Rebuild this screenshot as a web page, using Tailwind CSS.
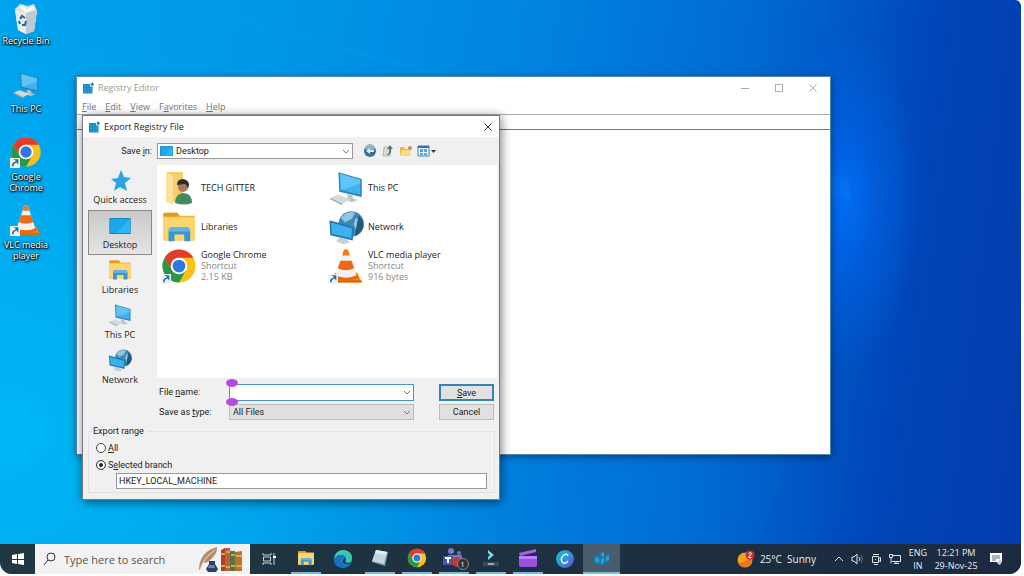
<!DOCTYPE html>
<html lang="en">
<head>
    <meta charset="UTF-8">
    <meta name="viewport" content="width=device-width, initial-scale=1.0">
    <title>Export Registry File</title>
    <script src="https://cdn.jsdelivr.net/npm/@tailwindcss/browser@4"></script>
</head>
<body class="bg-white font-['Open_Sans',sans-serif] text-[9px] leading-[11px] text-[#222]">
    <!-- Shared icons -->
    <svg class="hidden">
        <symbol id="chrome" viewBox="0 0 48 48">
            <circle cx="24" cy="24" r="22" fill="#fbc116"/>
            <path d="M4.9 13A22 22 0 0 1 43.1 13H24a11 11 0 0 0-9.5 16.500z" fill="#e33b2e"/>
            <path d="M4.900 13A22 22 0 0 0 24 46l9.500-16.500a11 11 0 0 1-19 0z" fill="#279847"/>
            <circle cx="24" cy="24" r="11" fill="#fff"/>
            <circle cx="24" cy="24" r="8.500" fill="#2f78e0"/>
        </symbol>
        <symbol id="vlc" viewBox="0 0 48 48">
            <path d="M9 33h30l6 13H3z" fill="#f38a0b"/>
            <path d="M3 43h42v3H3z" fill="#d66a08"/>
            <path d="M21 3q3-3 6 0l11 34q-14 7-28 0z" fill="#f2f2f2"/>
            <path d="M21 3q3-3 6 0l2 7H19z" fill="#ef7a1a"/>
            <path d="M16.500 17h15l3.500 10q-11 5-22 0z" fill="#ea6a16"/>
            <path d="M9 36q15 7 30 0l2 4q-17 7-34 0z" fill="#ea6a16"/>
        </symbol>
        <symbol id="pc" viewBox="0 0 48 48">
            <path d="M14 3l31 9v24L15 29z" fill="#2b82b4"/>
            <path d="M16 5l27 8v20L17 27z" fill="#3fb2ef"/>
            <path d="M16 5l27 8v5L17 27z" fill="#62c4f5"/>
            <path d="M26 32l7 2v4l7 2-8 3-12-4 6-2z" fill="#bac4cb"/>
            <path d="M3 37l10-4 17 6-11 6z" fill="#d3dadd"/>
            <path d="M3 37l16 8v2L3 39z" fill="#98a4ab"/>
        </symbol>
        <symbol id="network" viewBox="0 0 48 48">
            <circle cx="31" cy="20" r="17" fill="#3b88b5"/>
            <path d="M17 12Q25 1 36 5l-4 8-9 5zM37 12l8 3 1 9-8 5-4-9z" fill="#8fc6e0"/>
            <path d="M41 8q12 14 0 25l-5 3 2-13z" fill="#24577c"/>
            <path d="M2 15l32 9-1 18-30-7z" fill="#2378ae"/>
            <path d="M4 18l28 8-1 13-26-6z" fill="#3bb1f0"/>
            <path d="M15 38l9 2 5 5-9 2-9-4z" fill="#c6d0d5"/>
        </symbol>
        <symbol id="libraries" viewBox="0 0 48 48">
            <path d="M3 7q0-2 2-2h17l3 4h20v33H3z" fill="#f0b93c"/>
            <path d="M3 7q0-2 2-2h17l2 5H3z" fill="#e29a20"/>
            <path d="M3 11h42v31H3z" fill="#fad570"/>
            <path d="M10 43V30q0-6 6-6h17q6 0 6 6v13h-8v-9H18v9z" fill="#3e96d1"/>
            <path d="M16 24h17q6 0 6 6H10q0-6 6-6z" fill="#63b3e4"/>
        </symbol>
        <symbol id="screen" viewBox="0 0 24 18">
            <path d="M0 0h24v18H0z" fill="#1581bd"/>
            <path d="M1 1h22v16H1z" fill="#1ba7ee"/>
            <path d="M23 1v16H8z" fill="#2cb8f8"/>
        </symbol>
        <symbol id="regedit" viewBox="0 0 24 24">
            <path d="M2 4h14v5h5v14H2z" fill="#1580b3"/>
            <path d="M3 5h6v5H3zM10 5h5v5h-5zM3 11h6v5H3zM10 11h5v5h-5zM16 11h4v5h-4zM3 17h6v5H3zM10 17h5v5h-5zM16 17h4v5h-4z" fill="#239ed0"/>
            <path d="M17 3l4-2 3 3-2 4-4-1z" fill="#2583b4"/>
        </symbol>
        <symbol id="shortcut" viewBox="0 0 12 12">
            <path d="M0 0h12v12H0z" fill="#eef3f6"/>
            <path d="M2.500 10q-.5-5 4-5.500V2.500h-2V1.500H10v6H9L8.500 5.500Q4 6 4.500 10z" fill="#276aa0"/>
        </symbol>
        <symbol id="chevron" viewBox="0 0 8 5">
            <path d="M1 1l3 3 3-3" fill="none" stroke="#777" stroke-width="1"/>
        </symbol>
    </svg>

    <div class="relative h-screen overflow-hidden pr-[3px] pb-[2px]">
        <div class="relative flex h-full flex-col overflow-hidden rounded-tr-md rounded-b-xl bg-[radial-gradient(ellipse_75px_170px_at_845px_200px,#006cf5_0%,#0066ee90_40%,transparent_100%),radial-gradient(ellipse_500px_400px_at_0%_75%,#00b7f5_0%,transparent_100%),linear-gradient(97deg,#00a3ed_0%,#0098e8_25%,#0083df_50%,#0069d2_70%,#0045b7_87%,#033caf_100%)]">
            <!-- Light rays of the wallpaper -->
            <svg class="absolute left-0 top-0 h-full w-full" viewBox="0 0 1021 574" preserveAspectRatio="none">
                <path d="M170 0L850 180v20z" fill="#1ba4f5" opacity=".1"/>
                <path d="M500 574L850 250l-100 324z" fill="#00a4f5" opacity=".05"/>
            </svg>

            <!-- Desktop icons -->
            <ul class="relative flex w-[52px] grow flex-col text-center text-[9px] leading-[11px] text-white [text-shadow:0_1px_2px_#000,1px_1px_2px_#000,0_0_2px_#000]">
                <li class="flex h-[68px] flex-col items-center pt-[3px]">
                    <svg class="h-8 w-7 shrink-0" viewBox="0 0 28 32">
                        <path d="M3 6l5-5 8 2 6-2 3 7-3 20-8 3-8-4z" fill="#d7e2e7"/>
                        <path d="M3 7l11 3 11-3-3 21-8 3-8-4z" fill="#e7ebed"/>
                        <path d="M14 10l11-3-3 21-8 3z" fill="#bfcbd1"/>
                        <path d="M7 4l4-2 4 4 6-3 2 3-9 4z" fill="#f7f9fa"/>
                        <path d="M8 16l2-3 3 2M14 18l-1 4h-3M8 21l-1-3" fill="none" stroke="#1769ad" stroke-width="2"/>
                    </svg>
                    <span class="whitespace-nowrap">Recycle Bin</span>
                </li>
                <li class="flex h-[68px] flex-col items-center pt-[3px]">
                    <svg class="h-7 w-8 shrink-0"><use href="#pc"/></svg>
                    <span class="mt-1">This PC</span>
                </li>
                <li class="flex h-[68px] flex-col items-center">
                    <span class="relative mb-[3px] h-8 w-8 shrink-0">
                        <svg class="h-8 w-8"><use href="#chrome"/></svg>
                        <svg class="absolute bottom-0 left-0 h-[10px] w-[10px]"><use href="#shortcut"/></svg>
                    </span>
                    <span>Google Chrome</span>
                </li>
                <li class="flex h-[68px] flex-col items-center">
                    <span class="relative mb-[3px] h-8 w-8 shrink-0">
                        <svg class="h-8 w-8"><use href="#vlc"/></svg>
                        <svg class="absolute bottom-0 left-0 h-[10px] w-[10px]"><use href="#shortcut"/></svg>
                    </span>
                    <span class="whitespace-nowrap">VLC media<br>player</span>
                </li>
            </ul>

            <!-- Registry Editor window -->
            <section class="absolute left-[76px] top-[76px] flex h-[379px] w-[755px] flex-col border border-[#5288a8] bg-white shadow-[0_2px_8px_#0006]">
                <header class="flex h-[21px] shrink-0 items-center pl-[5px] text-[#999]">
                    <svg class="h-3 w-3"><use href="#regedit"/></svg>
                    <h1 class="ml-1 grow">Registry Editor</h1>
                    <button class="flex h-full w-[34px] items-center justify-center" aria-label="Minimize"><svg class="h-2 w-2" viewBox="0 0 8 8"><path d="M0 4.500h8" stroke="#aaa"/></svg></button>
                    <button class="flex h-full w-[34px] items-center justify-center" aria-label="Maximize"><svg class="h-2 w-2" viewBox="0 0 8 8"><path d="M.5.5h7v7h-7z" fill="none" stroke="#aaa"/></svg></button>
                    <button class="flex h-full w-[34px] items-center justify-center" aria-label="Close"><svg class="h-2 w-2" viewBox="0 0 8 8"><path d="M.5.5l7 7m0-7l-7 7" stroke="#aaa"/></svg></button>
                </header>
                <nav class="flex h-4 shrink-0 items-center gap-[9px] pl-[5px] text-[#777]">
                    <button><u>F</u>ile</button>
                    <button><u>E</u>dit</button>
                    <button><u>V</u>iew</button>
                    <button>F<u>a</u>vorites</button>
                    <button><u>H</u>elp</button>
                </nav>
                <div class="h-4 shrink-0 border-y border-t-[#aaa] border-b-[#777]"></div>
                <div class="grow"></div>
            </section>

            <!-- Export dialog -->
            <form class="absolute left-[82px] top-[115px] flex h-[385px] w-[418px] flex-col border border-[#778] bg-[#f0f0f0] shadow-[1px_2px_10px_#0008]">
                <header class="flex h-[21px] shrink-0 items-center bg-white pl-[5px]">
                    <svg class="h-3 w-3"><use href="#regedit"/></svg>
                    <h2 class="ml-1 grow">Export Registry File</h2>
                    <button type="button" class="flex h-full w-[22px] items-center justify-center" aria-label="Close"><svg class="h-2 w-2" viewBox="0 0 8 8"><path d="M.5.5l7 7m0-7l-7 7" stroke="#333"/></svg></button>
                </header>

                <div class="flex h-[28px] shrink-0 items-center font-[Roboto,sans-serif]">
                    <label for="saveIn" class="w-[74px] pr-[5px] text-right">Save <u>i</u>n:</label>
                    <div class="relative w-[196px]">
                        <select id="saveIn" class="block h-4 w-full appearance-none border border-[#999] bg-white pl-[18px] leading-[13px]"><option>Desktop</option></select>
                        <svg class="absolute left-[3px] top-[3px] h-[10px] w-[13px]"><use href="#screen"/></svg>
                        <svg class="absolute right-[3px] top-[6px] h-[5px] w-2"><use href="#chevron"/></svg>
                    </div>
                    <div class="ml-[10px] flex items-center gap-1">
                        <button type="button" aria-label="Back"><svg class="block h-[14px] w-[14px]" viewBox="0 0 14 14"><circle cx="7" cy="7" r="6" fill="#3b6f8e"/><path d="M2 5a5 5 0 0 1 10 0q-5 2-10 0z" fill="#8fb4c4"/><path d="M3 7l4-3v2h4v2H7v2z" fill="#d8f2ff"/><path d="M3 10q4 3 8 0l-2 2H5z" fill="#1ba1db"/></svg></button>
                        <button type="button" aria-label="Up one level"><svg class="block h-[14px] w-[14px]" viewBox="0 0 14 14"><path d="M3 3h7l-1 9H2z" fill="#dad9cf" stroke="#aaa79a" stroke-width=".7"/><path d="M5 11q4-1 3-6H6l3-4 3 4h-2q1 5-3 6z" fill="#547b70"/></svg></button>
                        <button type="button" aria-label="New folder"><svg class="block h-[14px] w-[14px]" viewBox="0 0 14 14"><path d="M1 3h4l1 2h5v7H1z" fill="#e7b94c"/><path d="M3 6h9l-2 6H1z" fill="#fbdc80"/><circle cx="11" cy="4" r="2" fill="#dd8450"/></svg></button>
                        <button type="button" class="flex items-center" aria-label="View menu"><svg class="h-[14px] w-[19px]" viewBox="0 0 19 14"><path d="M1 2h11v10H1z" fill="#eaf6ff" stroke="#3f83b5"/><path d="M1 2h11v2H1z" fill="#2d73b3"/><path d="M3 5h3v3H3zM7 5h3v3H7zM3 9h3v2H3zM7 9h3v2H7z" fill="#5ba4d6"/><path d="M14 6h5l-2.500 3z" fill="#333"/></svg></button>
                    </div>
                </div>

                <div class="flex shrink-0">
                    <!-- Places bar -->
                    <div class="ml-[5px] mr-[5px] w-16 shrink-0">
                        <button type="button" class="flex h-[45px] w-full flex-col items-center justify-end gap-[2px] pb-[5px]">
                            <svg class="h-6 w-6" viewBox="0 0 24 24"><path d="M13 2l3 7 7 1-6 5 2 8-7-4-6 4 2-8-5-4 7-1z" fill="#29a5e5"/></svg>
                            <span>Quick access</span>
                        </button>
                        <button type="button" class="flex h-[45px] w-full flex-col items-center justify-end gap-[2px] border border-[#888] bg-gradient-to-b from-[#c9c9c9] to-[#e5e5e5] pb-1">
                            <svg class="mb-[3px] h-4 w-[22px]"><use href="#screen"/></svg>
                            <span>Desktop</span>
                        </button>
                        <button type="button" class="flex h-[45px] w-full flex-col items-center justify-end gap-[2px] pb-[5px]">
                            <svg class="h-6 w-6"><use href="#libraries"/></svg>
                            <span>Libraries</span>
                        </button>
                        <button type="button" class="flex h-[45px] w-full flex-col items-center justify-end gap-[2px] pb-[5px]">
                            <svg class="h-6 w-6"><use href="#pc"/></svg>
                            <span>This PC</span>
                        </button>
                        <button type="button" class="flex h-[45px] w-full flex-col items-center justify-end gap-[2px] pb-[5px]">
                            <svg class="h-6 w-6"><use href="#network"/></svg>
                            <span>Network</span>
                        </button>
                    </div>

                    <div class="grow">
                        <!-- File list -->
                        <ul class="mr-[2px] grid h-[213px] grid-cols-[167px_1fr] content-start bg-white pl-1 pt-[3px]">
                            <li class="flex h-[39px] items-center gap-1">
                                <svg class="h-9 w-9" viewBox="0 0 36 36">
                                    <path d="M5 2h17v30H5z" fill="#f5ce6d"/>
                                    <path d="M5 2l7 4v29l-7-3z" fill="#fbe39a"/>
                                    <path d="M14 33q0-9 8-10 9 0 9 10-8 3-17 0z" fill="#438b60"/>
                                    <circle cx="22" cy="17" r="5" fill="#ad765a"/>
                                    <path d="M16 15q0-6 6-6 6 1 6 6l-1 4q-1-5-4-5z" fill="#2b2b2c"/>
                                </svg>
                                <span>TECH GITTER</span>
                            </li>
                            <li class="flex h-[39px] items-center gap-1">
                                <svg class="h-9 w-9"><use href="#pc"/></svg>
                                <span>This PC</span>
                            </li>
                            <li class="flex h-[39px] items-center gap-1">
                                <svg class="h-9 w-9"><use href="#libraries"/></svg>
                                <span>Libraries</span>
                            </li>
                            <li class="flex h-[39px] items-center gap-1">
                                <svg class="h-9 w-9"><use href="#network"/></svg>
                                <span>Network</span>
                            </li>
                            <li class="flex h-[39px] items-center gap-1">
                                <span class="relative h-9 w-9">
                                    <svg class="h-9 w-9"><use href="#chrome"/></svg>
                                    <svg class="absolute bottom-0 left-0 h-[10px] w-[10px]"><use href="#shortcut"/></svg>
                                </span>
                                <span>Google Chrome<span class="block text-[#888]">Shortcut<br>2.15 KB</span></span>
                            </li>
                            <li class="flex h-[39px] items-center gap-1">
                                <span class="relative h-9 w-9">
                                    <svg class="h-9 w-9"><use href="#vlc"/></svg>
                                    <svg class="absolute bottom-0 left-0 h-[10px] w-[10px]"><use href="#shortcut"/></svg>
                                </span>
                                <span>VLC media player<span class="block text-[#888]">Shortcut<br>916 bytes</span></span>
                            </li>
                        </ul>

                        <div class="mr-[5px] mt-[6px] grid grid-cols-[72px_185px_1fr] items-center gap-y-[3px] font-[Roboto,sans-serif]">
                            <label for="fileName" class="pl-[2px]">File <u>n</u>ame:</label>
                            <div class="relative">
                                <input id="fileName" type="text" class="block h-[17px] w-full border border-[#4a94c4] bg-white px-1 outline-none">
                                <svg class="absolute right-[3px] top-[6px] h-[5px] w-2"><use href="#chevron"/></svg>
                                <!-- selection handles -->
                                <span class="absolute -left-[3px] -top-[5px] z-10 h-2 w-3 rounded-[50%] bg-[#b44bdc]"></span>
                                <span class="absolute -bottom-[5px] -left-[3px] z-10 h-2 w-3 rounded-[50%] bg-[#b44bdc]"></span>
                            </div>
                            <button type="submit" class="ml-auto h-[17px] w-[55px] border-2 border-[#3585b4] bg-[#e1e1e1] leading-[12px]"><u>S</u>ave</button>
                            <label for="fileType" class="pl-[2px]">Save as <u>t</u>ype:</label>
                            <div class="relative">
                                <select id="fileType" class="block h-4 w-full appearance-none border border-[#bbb] bg-[#e0e0e0] pl-[3px] leading-[13px]"><option>All Files</option></select>
                                <svg class="absolute right-[3px] top-[6px] h-[5px] w-2"><use href="#chevron"/></svg>
                            </div>
                            <button type="button" class="ml-auto h-4 w-[55px] border border-[#bbb] bg-[#e1e1e1] leading-[12px]">Cancel</button>
                        </div>
                    </div>
                </div>

                <fieldset class="mx-[5px] mt-[6px] h-[67px] shrink-0 border border-[#e2e2e2] px-[7px] font-[Roboto,sans-serif]">
                    <legend class="-ml-[3px] pr-1">Export range</legend>
                    <label class="flex h-[17px] items-center gap-[2px] pt-[5px]"><input type="radio" name="range" class="h-[10px] w-[10px] appearance-none rounded-full border border-[#444] bg-white checked:bg-[#222] checked:shadow-[inset_0_0_0_2px_white]"><span><u>A</u>ll</span></label>
                    <label class="flex h-[17px] items-center gap-[2px] pt-[5px]"><input type="radio" name="range" checked class="h-[10px] w-[10px] appearance-none rounded-full border border-[#444] bg-white checked:bg-[#222] checked:shadow-[inset_0_0_0_2px_white]"><span>S<u>e</u>lected branch</span></label>
                    <input type="text" value="HKEY_LOCAL_MACHINE" aria-label="Selected branch" class="ml-5 mt-[2px] block h-4 w-[371px] border border-[#999] bg-white px-[2px]">
                </fieldset>
            </form>

            <!-- Taskbar -->
            <footer class="relative flex h-[30px] shrink-0 items-stretch bg-gradient-to-r from-[#203842] to-[#1b2a40] text-[#e8eef2]">
                <button class="flex w-[35px] items-center justify-center" aria-label="Start"><svg class="h-3 w-3" viewBox="0 0 12 12"><path d="M0 2l5-1v5H0zM6 1l6-1v6H6zM0 7h5v4l-5-1zM6 7h6v5l-6-1z" fill="#fff"/></svg></button>
                <label class="flex w-[215px] items-center bg-[#f2f2f2] pl-2">
                    <svg class="h-[14px] w-[14px] shrink-0" viewBox="0 0 14 14"><circle cx="8" cy="5" r="4" fill="none" stroke="#333"/><path d="M5 8l-4 5" stroke="#333"/></svg>
                    <input type="search" placeholder="Type here to search" aria-label="Search" class="ml-[7px] w-0 grow text-[11px] outline-none placeholder:text-[#555]">
                    <svg class="mr-[6px] h-7 w-12 shrink-0" viewBox="0 0 48 28">
                        <path d="M3 25Q3 7 21 2q1 7-9 15l-5 1-3 7z" fill="#b68c68"/>
                        <path d="M4 25Q8 12 19 5" fill="none" stroke="#f2dfc5"/>
                        <path d="M13 16h6v3l3 5-2 3h-8l-2-3 3-5z" fill="#294064"/>
                        <path d="M13 20h5l1 3h-7z" fill="#7287a6"/>
                        <path d="M25 5l4-2v23h-4z" fill="#ad4129"/><path d="M29 3h5v23h-5z" fill="#c95b36"/><path d="M34 6h5v20h-5z" fill="#5a7544"/><path d="M39 7l7-1v20h-7z" fill="#ba712e"/>
                        <path d="M25 9h4M30 7h4M35 10h4M40 11h6M25 21h4M30 22h4M35 21h4M40 21h6" stroke="#e8bf55" stroke-width="1.500"/>
                    </svg>
                </label>
                <button class="flex w-[37px] items-center justify-center" aria-label="Task view"><svg class="h-[14px] w-[14px]" viewBox="0 0 14 14"><path d="M1 1v2h8V1M1 13v-2h8v2M1.500 5h7v4h-7zM12 1v12" fill="none" stroke="#c7d0d4"/><path d="M11 4h3v2h-3z" fill="#fff"/></svg></button>
                <button class="flex w-[37px] items-center justify-center" aria-label="File Explorer"><span class="flex h-full w-[30px] items-center justify-center border-b-2 border-[#76b9ed]"><svg class="h-[18px] w-[18px]"><use href="#libraries"/></svg></span></button>
                <button class="flex w-[37px] items-center justify-center" aria-label="Edge"><svg class="h-5 w-5" viewBox="0 0 20 20"><circle cx="10" cy="10" r="9" fill="#1685ce"/><path d="M1 10Q2 1 11 1q8 1 8 8 0 5-5 5l-2-2q3-5-3-6-5 0-8 4z" fill="#3bc8aa"/><path d="M1 10q4-5 8-4 5 1 3 5 1-2-2-2-3 1-2 4 2 4 8 3-3 3-7 3Q1 18 1 10z" fill="#1673c1"/><path d="M12 9q2 2 0 4 2 2 6 0l-2 2q-3 1-6-1-1-3 2-5z" fill="#203842"/></svg></button>
                <button class="flex w-[37px] items-center justify-center" aria-label="Notepad"><span class="flex h-full w-[30px] items-center justify-center border-b-2 border-[#76b9ed]"><svg class="h-[18px] w-[18px]" viewBox="0 0 18 18"><path d="M5 1l12 2-3 14-13-4z" fill="#7f9dab"/><path d="M5 1l11 2-3 12-12-3z" fill="#c3d6dd"/><path d="M5 1l11 2-1 3-11-2z" fill="#e3edf0"/></svg></span></button>
                <button class="flex w-[37px] items-center justify-center" aria-label="Chrome"><span class="flex h-full w-[30px] items-center justify-center border-b-2 border-[#76b9ed]"><svg class="h-5 w-5"><use href="#chrome"/></svg></span></button>
                <button class="flex w-[37px] items-center justify-center" aria-label="Teams"><span class="relative flex h-full w-[30px] items-center justify-center border-b-2 border-[#76b9ed]">
                    <svg class="h-5 w-6" viewBox="0 0 24 20"><circle cx="9" cy="3" r="3" fill="#777ddd"/><circle cx="17" cy="5" r="2" fill="#6975c8"/><path d="M6 7h14v7q-4 5-11 2z" fill="#7279d5"/><path d="M1 8h10v9H1z" fill="#4855b5"/><path d="M3 10h6M6 10v5" stroke="#fff" stroke-width="2"/><circle cx="15" cy="14" r="5" fill="#c8372d"/></svg>
                    <span class="absolute bottom-[2px] right-0 h-3 w-3 rounded-full border border-[#888] bg-[#303035] text-[8px] leading-[10px]">1</span>
                </span></button>
                <button class="flex w-[37px] items-center justify-center" aria-label="Filmora"><span class="flex h-full w-[30px] items-center justify-center border-b-2 border-[#76b9ed]"><svg class="h-5 w-5" viewBox="0 0 20 20"><path d="M7 2l6 5-6 5V9l2-2-2-2z" fill="#78dcec"/><path d="M2 14h16v4H2z" fill="#3b4b5d"/><path d="M7 16h6" stroke="#fff"/></svg></span></button>
                <button class="flex w-[37px] items-center justify-center" aria-label="Clipchamp"><span class="flex h-full w-[30px] items-center justify-center border-b-2 border-[#76b9ed]"><svg class="h-5 w-5" viewBox="0 0 20 20"><path d="M1 5l17-4v3L2 8z" fill="#a463ec"/><path d="M1 8h18v9q0 2-2 2H3q-2 0-2-2z" fill="#9b50e0"/><path d="M1 8h18v3H1z" fill="#c07cff"/></svg></span></button>
                <button class="flex w-[37px] items-center justify-center" aria-label="Canva"><svg class="h-5 w-5" viewBox="0 0 20 20"><defs><linearGradient id="canvaFill" x1="0" y1="0" x2="1" y2="1"><stop stop-color="#16c4d2"/><stop offset=".6" stop-color="#3689d9"/><stop offset="1" stop-color="#7637dc"/></linearGradient></defs><circle cx="10" cy="10" r="9" fill="url(#canvaFill)"/><path d="M13 7q-1-3-4-1-4 3-2 7 3 3 6-1" fill="none" stroke="#e4faff" stroke-width="1.500"/></svg></button>
                <button class="flex w-[37px] items-center justify-center border-b-2 border-[#76b9ed] bg-[#4a5c6b]" aria-label="Registry Editor"><svg class="h-[18px] w-[18px]" viewBox="0 0 18 18"><path d="M1 7l4-1V5l3-1V1l3 2v3l3-1V3l3 2-1 9-7 3-8-3z" fill="#1679a5"/><path d="M2 8l4 1v5l-4-2zM9 3l2 1v4L8 7zM8 10l3-1v5l-3 1zM13 8l3-2v5l-3 1z" fill="#2f9fc8"/></svg></button>

                <div class="ml-auto flex items-center">
                    <button class="flex items-center gap-[5px] text-[10px]">
                        <svg class="h-[18px] w-[18px]" viewBox="0 0 18 18"><circle cx="8" cy="10" r="7.500" fill="#f4a11b"/><path d="M1 12q7 3 12-6l2 2q1 8-7 9-5 0-7-5z" fill="#e7761d"/><circle cx="13" cy="5" r="4.500" fill="#c5322c"/><path d="M11.500 3.500q3-2 3 0l-3 4h3" fill="none" stroke="#fff"/></svg>
                        <span class="whitespace-pre">25°C  Sunny</span>
                    </button>
                    <div class="ml-[18px] flex items-center gap-[7px]">
                        <button aria-label="Hidden icons"><svg class="block h-3 w-[10px]" viewBox="0 0 10 12"><path d="M1 8l4-4 4 4" fill="none" stroke="#dce4e8"/></svg></button>
                        <button aria-label="Volume"><svg class="block h-3 w-3" viewBox="0 0 12 12"><path d="M1 4h2l3-3v10L3 8H1z" fill="none" stroke="#dce4e8"/><path d="M8 4q2 2 0 4" fill="none" stroke="#dce4e8"/><path d="M10 2q3 4 0 8" fill="none" stroke="#687581"/></svg></button>
                        <button aria-label="Meet now"><svg class="block h-3 w-3" viewBox="0 0 12 12"><path d="M2.500 3.500h6v6h-6zM8.500 5.500l2-1v4l-2-1M3 1.500h6M4 11.500h4M5 6.500h1" fill="none" stroke="#dce4e8"/></svg></button>
                        <button aria-label="Network"><svg class="block h-3 w-3" viewBox="0 0 12 12"><path d="M4 2.500h7.500v6H3M7 8.500v2M5 10.500h5M.5 1.500h3v3h-3zM2 4.500v6" fill="none" stroke="#dce4e8"/></svg></button>
                    </div>
                    <button class="ml-[3px] w-7 text-[9px] leading-[13px]">ENG<br>IN</button>
                    <button class="w-[48px] whitespace-nowrap text-[9px] leading-[13px]">12:21 PM<br>29-Nov-25</button>
                    <button class="ml-[9px] mr-[18px]" aria-label="Notifications"><svg class="block h-[14px] w-[14px]" viewBox="0 0 14 14"><path d="M1 1h12v9h-2v3l-3-3H1z" fill="#fff"/><path d="M3 4h8M3 6h8M3 8h4" stroke="#5c6976"/><path d="M11 7q3 3 0 6l-3-2z" fill="#c7d0d6"/></svg></button>
                </div>
            </footer>
        </div>
    </div>
</body>
</html>
